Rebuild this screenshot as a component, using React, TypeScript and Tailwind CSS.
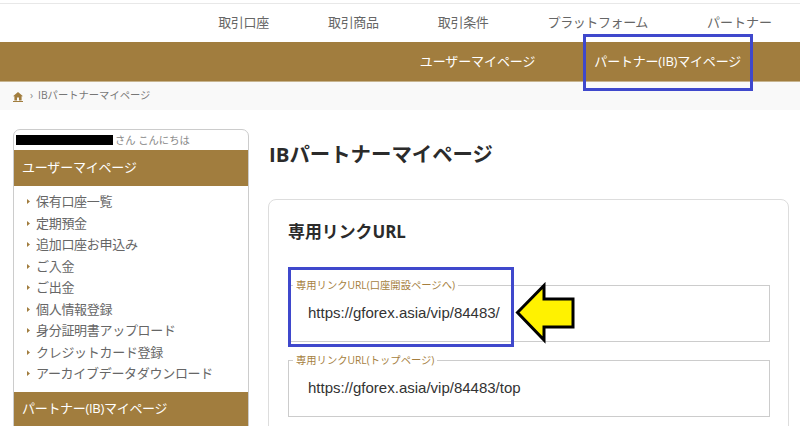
const F = '"Open Sans","Noto Sans CJK JP",sans-serif';
const nav = ["取引口座", "取引商品", "取引条件", "プラットフォーム", "パートナー"];
const side = ["保有口座一覧", "定期預金", "追加口座お申込み", "ご入金", "ご出金", "個人情報登録", "身分証明書アップロード", "クレジットカード登録", "アーカイブデータダウンロード"];

function LinkBox({ label, url }: { label: string; url: string }) {
  return (
    <fieldset className="h-[63px] border border-[#cccccc] pl-[4px] m-0 min-w-0">
      <legend className="text-[10.3px] leading-[12px] text-[#a67f3f] px-[3px] ml-0">{label}</legend>
      <div className="pl-[15px] pt-[12px] text-[15px] leading-[20px] text-[#333333] font-['Liberation_Sans',sans-serif]">{url}</div>
    </fieldset>
  );
}

export default function App() {
  return (
    <div className="relative w-[800px] h-[426px] overflow-hidden bg-white" style={{ fontFamily: F }}>
      <div className="pt-[3px]">
        <div className="h-[39px] border-t border-[#e8e8e8] flex justify-end items-center gap-[59px] pr-[28px] text-[13px] text-[#666666]">
          {nav.map((n) => <span key={n} className={n === "プラットフォーム" ? "tracking-[-0.4px]" : n === "パートナー" ? "" : "tracking-[-0.3px]"}>{n}</span>)}
        </div>
        <div className="h-[40px] bg-[#a17d3e] border-b border-[#c7b48f] flex justify-end items-center gap-[59px] pr-[59px] text-[13px] text-white">
          <span className="tracking-[-0.1px]">ユーザーマイページ</span>
          <span className="tracking-[-0.2px]">パートナー(IB)マイページ</span>
        </div>
        <div className="h-[28px] bg-[#f9f9f9] flex items-center pl-[13px] text-[10.3px] text-[#777777]">
          <svg width="10" height="10" viewBox="0 0 10 10" className="border-b border-[#a17d3e] box-content">
            <path d="M5 1 L10 5.2 H8.6 V9.5 H6 V6.5 H4 V9.5 H1.4 V5.2 H0 Z" fill="#a17d3e" />
          </svg>
          <span className="ml-[7px] mr-[5px] text-[#888888]">›</span>
          <span>IBパートナーマイページ</span>
        </div>
        <div className="flex pt-[19px] pl-[13px]">
          <aside className="w-[236px] h-[400px] shrink-0 border border-[#cccccc] rounded-t-[7px]">
            <div className="h-[20px] flex items-center pl-[2px] text-[10.3px] leading-[14px] text-[#888888]">
              <span className="w-[97px] h-[10px] bg-black mr-[2px]" />
              <span>さん こんにちは</span>
            </div>
            <div className="h-[36px] bg-[#a17d3e] flex items-center pl-[8px] text-[13px] tracking-[-0.2px] text-white">ユーザーマイページ</div>
            <ul className="pt-[5px] pl-[13px] text-[13px] tracking-[-0.3px] text-[#666666]">
              {side.map((s) => (
                <li key={s} className="h-[21.5px] flex items-center">
                  <svg width="3" height="5" viewBox="0 0 3 5" className="mr-[6px]"><path d="M0 0 L3 2.5 L0 5 Z" fill="#a17d3e" /></svg>
                  {s}
                </li>
              ))}
            </ul>
            <div className="mt-[7px] h-[34px] bg-[#a17d3e] flex items-center pl-[8px] text-[13px] tracking-[-0.3px] text-white">パートナー(IB)マイページ</div>
          </aside>
          <main className="w-[521px] ml-[19px] shrink-0">
            <h1 className="mt-[6px] h-[38px] pl-[1px] text-[20.4px] leading-[38px] font-bold text-[#2b2b2b]">IBパートナーマイページ</h1>
            <section className="mt-[26px] h-[300px] border border-[#dddddd] rounded-t-[8px] px-[19px]">
              <h2 className="mt-[20px] h-[24px] text-[16.9px] leading-[24px] font-bold text-[#2b2b2b]">専用リンクURL</h2>
              <div className="mt-[35px] w-[482px] flex flex-col gap-[12px]">
                <LinkBox label="専用リンクURL(口座開設ページへ)" url="https://gforex.asia/vip/84483/" />
                <LinkBox label="専用リンクURL(トップページ)" url="https://gforex.asia/vip/84483/top" />
              </div>
            </section>
          </main>
        </div>
      </div>
      <div className="absolute left-[583px] top-[34px] w-[170px] h-[57px] border-[3px] border-[#3f48cc]" />
      <div className="absolute left-[288px] top-[267px] w-[226px] h-[80px] border-[3px] border-[#3f48cc]" />
      <svg className="absolute left-[515px] top-[282px]" width="60" height="62" viewBox="0 0 60 62">
        <path d="M2.5 30.5 L29 3.5 V17 H58 V45 H29 V58 Z" fill="#fff200" stroke="#000000" strokeWidth="3" />
      </svg>
    </div>
  );
}
